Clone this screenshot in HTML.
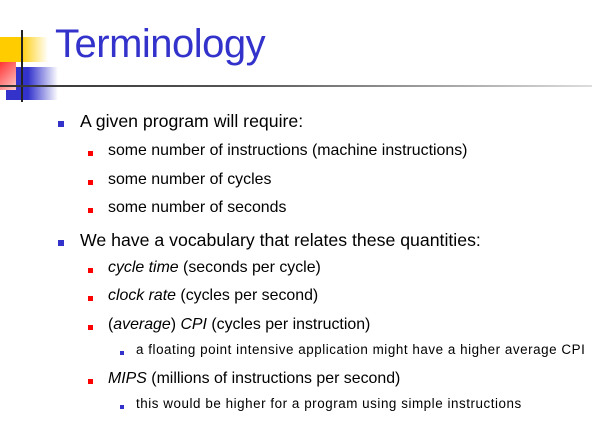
<!DOCTYPE html>
<html><head><style>
body{margin:0;width:592px;height:429px;background:#fff;position:relative;overflow:hidden;font-family:"Liberation Sans",sans-serif;color:#000}
.a{position:absolute;white-space:nowrap}
.t{left:55px;top:22px;font-size:40px;color:#3333cc;letter-spacing:-0.5px}
.l1{left:80px;font-size:17.7px}
.l2{left:108px;font-size:15.9px}
.l3{left:136px;font-size:13.4px;letter-spacing:0.55px}
.b{position:absolute}
.b1{width:6px;height:6px;background:#3333cc}
.b2{width:5px;height:5px;background:#ff0000}
.b3{width:4px;height:4px;background:#3333cc}
i{font-style:italic}
</style></head><body>
<div class="b" style="left:0;top:37px;width:48px;height:25px;background:linear-gradient(90deg,#ffcc00 0,#ffcc00 20px,#fff 48px)"></div>
<div class="b" style="left:6px;top:67px;width:52px;height:33px;background:linear-gradient(90deg,#3333cc 0,#3333cc 22px,#fff 52px)"></div>
<div class="b" style="left:0;top:62px;width:16px;height:28px;background:linear-gradient(135deg,#ff3333,#ffcccc)"></div>
<div class="b" style="left:21px;top:30px;width:2px;height:72px;background:#222"></div>
<div class="b" style="left:0;top:85px;width:592px;height:2px;background:linear-gradient(90deg,#333 0,#555 40%,#ddd 100%)"></div>
<div class="a t">Terminology</div>

<div class="b b1" style="left:58px;top:121px"></div><div class="a l1" style="top:111px">A given program will require:</div>
<div class="b b2" style="left:88px;top:151px"></div><div class="a l2" style="top:142px">some number of instructions (machine instructions)</div>
<div class="b b2" style="left:88px;top:180px"></div><div class="a l2" style="top:171px">some number of cycles</div>
<div class="b b2" style="left:88px;top:208px"></div><div class="a l2" style="top:199px">some number of seconds</div>
<div class="b b1" style="left:58px;top:240px"></div><div class="a l1" style="top:230px">We have a vocabulary that relates these quantities:</div>
<div class="b b2" style="left:88px;top:268px"></div><div class="a l2" style="top:259px"><i>cycle time</i> (seconds per cycle)</div>
<div class="b b2" style="left:88px;top:296px"></div><div class="a l2" style="top:287px"><i>clock rate</i> (cycles per second)</div>
<div class="b b2" style="left:88px;top:325px"></div><div class="a l2" style="top:316px">(<i>average</i>) <i>CPI</i> (cycles per instruction)</div>
<div class="b b3" style="left:120px;top:351px"></div><div class="a l3" style="top:342px">a floating point intensive application might have a higher average CPI</div>
<div class="b b2" style="left:88px;top:379px"></div><div class="a l2" style="top:370px"><i>MIPS</i> (millions of instructions per second)</div>
<div class="b b3" style="left:120px;top:405px"></div><div class="a l3" style="top:396px">this would be higher for a program using simple instructions</div>
</body></html>
